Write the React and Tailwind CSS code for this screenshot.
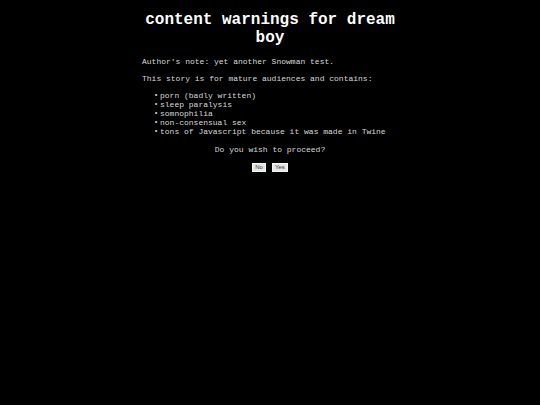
export default function App() {
  const items = [
    "porn (badly written)",
    "sleep paralysis",
    "somnophilia",
    "non-consensual sex",
    "tons of Javascript because it was made in Twine",
  ];
  const mono = { fontFamily: '"Liberation Mono", "Courier New", monospace' };
  const sans = { fontFamily: '"Liberation Sans", Arial, sans-serif' };
  return (
    <div className="min-h-[405px] w-full bg-black" style={mono}>
      <div className="mx-auto w-[256px] pt-[11px]">
        <h1 className="text-center text-[16px] font-bold leading-[18px] text-white">
          content warnings for dream boy
        </h1>
        <div className="mt-[10px] text-[8px] leading-[9px] text-[#d8d8d8]">
          <p>Author's note: yet another Snowman test.</p>
          <p className="mt-[8px]">This story is for mature audiences and contains:</p>
          <ul className="mt-[8px] pl-[12px]">
            {items.map((t) => (
              <li key={t} className="flex">
                <span className="w-[6px] text-[7px]">•</span>
                <span>{t}</span>
              </li>
            ))}
          </ul>
          <p className="mt-[9px] text-center">Do you wish to proceed?</p>
          <div className="mt-[9px] flex justify-center gap-[6px]">
            <button
              className="h-[9px] px-[2px] border border-[#f4f4f4] bg-[#e6e6e6] text-[6px] leading-[7px] text-[#333]"
              style={sans}
            >
              No
            </button>
            <button
              className="h-[9px] px-[2px] border border-[#f4f4f4] bg-[#e6e6e6] text-[6px] leading-[7px] text-[#333]"
              style={sans}
            >
              Yes
            </button>
          </div>
        </div>
      </div>
    </div>
  );
}
